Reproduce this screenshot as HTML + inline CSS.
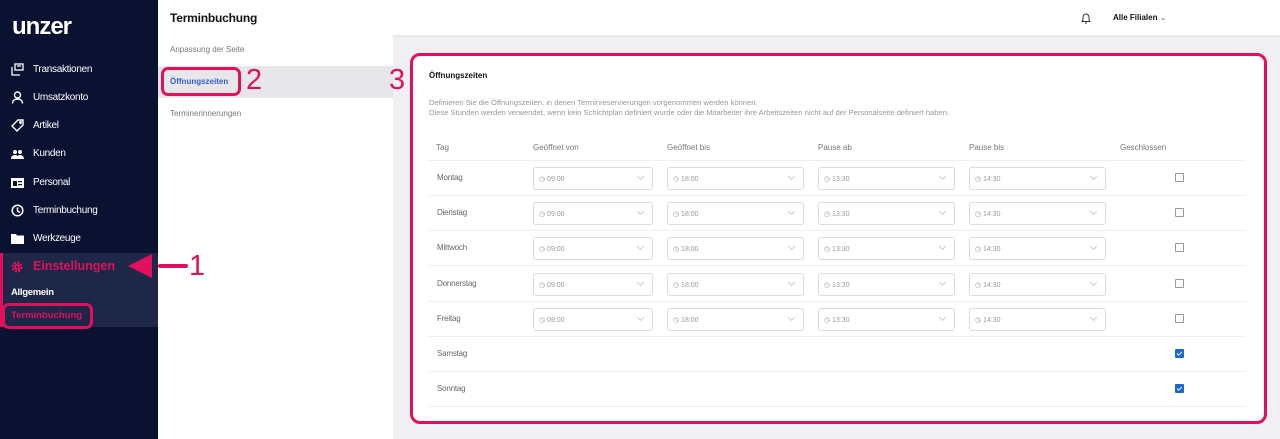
<!DOCTYPE html>
<html><head><meta charset="utf-8"><style>
*{box-sizing:border-box;margin:0;padding:0}
body{width:1280px;height:439px;overflow:hidden;background:#f0f0f3;font-family:"Liberation Sans",sans-serif;position:relative}
.a{position:absolute}
#side{left:0;top:0;width:158px;height:439px;background:#0b1131}
.nav{left:33px;color:#fff;font-size:10px;letter-spacing:-0.3px}
.ic{left:11px;width:13px;height:13px}
#top{left:158px;top:0;width:1122px;height:35px;background:#fff;box-shadow:0 1px 3px rgba(0,0,0,.06)}
#sub{left:158px;top:35px;width:235px;height:404px;background:#fff}
#card{left:410px;top:53px;width:857px;height:371px;background:#fff;border:3px solid #e0105e;border-radius:10px}
.lbl{font-size:8px;color:#666;letter-spacing:-0.2px}
.hd{font-size:8px;color:#777}
.line{left:428px;width:818px;height:1px;background:#efeff1}
.inp{height:23px;border:1px solid #dcdce0;border-radius:3px;background:#fff;font-size:7px;color:#999}
.inp span{position:absolute;left:5px;top:7px}
.inp i{position:absolute;right:9px;top:6px;width:5px;height:5px;border-right:1px solid #ccc;border-bottom:1px solid #ccc;transform:rotate(45deg)}
.cb{left:1175px;width:9px;height:9px;border:1px solid #999;border-radius:1px;background:#fff}
.cb.on{background:#1a66d6;border-color:#1a66d6}
.red{color:#e0105e}
</style></head><body>
<div id="side" class="a">
 <div class="a" style="left:12px;top:13px;color:#fff;font-size:24px;font-weight:bold;letter-spacing:-1px">unzer</div>
 <svg class="a ic" style="top:63px" viewBox="0 0 13 13" fill="none" stroke="#fff" stroke-width="1.3"><rect x="4" y="1" width="8" height="6"/><path d="M1 4v8h8"/><path d="M6 3h4"/></svg>
 <div class="a nav" style="top:64px">Transaktionen</div>
 <svg class="a ic" style="top:91px" viewBox="0 0 13 13" fill="none" stroke="#fff" stroke-width="1.4"><circle cx="6.5" cy="4" r="3"/><path d="M1.5 12.5c0-3 2-4.5 5-4.5s5 1.5 5 4.5"/></svg>
 <div class="a nav" style="top:92px">Umsatzkonto</div>
 <svg class="a ic" style="top:119px" viewBox="0 0 13 13" fill="none" stroke="#fff" stroke-width="1.4"><path d="M7 1h5v5l-6 6-5-5z"/><circle cx="9.5" cy="3.5" r=".8"/></svg>
 <div class="a nav" style="top:120px">Artikel</div>
 <svg class="a ic" style="top:148px" viewBox="0 0 13 13" fill="#fff"><circle cx="4" cy="4" r="2"/><circle cx="9" cy="4" r="2"/><path d="M0 11c0-3 2-4 4-4s4 1 4 4zM6 11c0-3 1.5-4 3-4s4 1 4 4z"/></svg>
 <div class="a nav" style="top:148px">Kunden</div>
 <svg class="a ic" style="top:176px" viewBox="0 0 13 13"><rect x="0" y="2" width="13" height="10" fill="#fff"/><rect x="2" y="5" width="4" height="5" fill="#0b1131"/><rect x="7" y="5" width="4" height="1.2" fill="#0b1131"/><rect x="7" y="8" width="4" height="1.2" fill="#0b1131"/></svg>
 <div class="a nav" style="top:177px">Personal</div>
 <svg class="a ic" style="top:204px" viewBox="0 0 13 13" fill="none" stroke="#fff" stroke-width="1.5"><circle cx="6.5" cy="6.5" r="5.3"/><path d="M6.5 3.5v3.5l2.5 1.5"/></svg>
 <div class="a nav" style="top:205px">Terminbuchung</div>
 <svg class="a ic" style="top:232px" viewBox="0 0 13 13" fill="#fff"><path d="M0 2h5l1 1.5h7V12H0z"/></svg>
 <div class="a nav" style="top:233px">Werkzeuge</div>
 <div class="a" style="left:0;top:253px;width:158px;height:74px;background:#1e2748"></div>
 <div class="a" style="left:0;top:253px;width:3px;height:74px;background:#e0105e"></div>
 <svg class="a" style="left:11px;top:261px" width="12" height="12" viewBox="0 0 12 12"><circle cx="6" cy="6" r="4.3" fill="none" stroke="#e0105e" stroke-width="2.6" stroke-dasharray="2 1.4"/><circle cx="6" cy="6" r="3" fill="#e0105e"/><circle cx="6" cy="6" r="1.2" fill="#1e2748"/></svg>
 <div class="a red" style="left:33px;top:259px;font-size:12.5px;font-weight:bold">Einstellungen</div>
 <div class="a" style="left:11px;top:287px;font-size:9.5px;color:#fff;font-weight:bold;letter-spacing:-0.3px">Allgemein</div>
 <div class="a red" style="left:11px;top:310px;font-size:9.5px;font-weight:bold">Terminbuchung</div>
 <div class="a" style="left:2px;top:303px;width:91px;height:26px;border:3px solid #e0105e;border-radius:7px"></div>
</div>
<div id="top" class="a">
 <div class="a" style="left:12px;top:11px;font-size:12px;color:#111;font-weight:bold;letter-spacing:-0.2px">Terminbuchung</div>
 <svg class="a" style="left:923px;top:12px" width="10" height="12" viewBox="0 0 10 12" fill="none" stroke="#333" stroke-width="1"><path d="M2 8V5a3 3 0 016 0v3l1 1.5H1z"/><path d="M4 11h2"/></svg>
 <div class="a" style="left:955px;top:13px;font-size:8px;color:#111;font-weight:bold">Alle Filialen <span style="font-weight:normal;color:#777">&#8964;</span></div>
</div>
<div id="sub" class="a">
 <div class="a" style="left:12px;top:10px;font-size:8px;color:#777">Anpassung der Seite</div>
 <div class="a" style="left:0;top:31px;width:235px;height:32px;background:#e7e7ea"></div>
 <div class="a" style="left:12px;top:42px;font-size:8px;color:#3a5bd6;font-weight:bold">Öffnungszeiten</div>
 <div class="a" style="left:3px;top:32px;width:80px;height:29px;border:3px solid #e0105e;border-radius:7px"></div>
 <div class="a" style="left:12px;top:74px;font-size:8px;color:#777">Terminerinnerungen</div>
</div>
<!-- arrow 1 -->
<svg class="a" style="left:124px;top:250px" width="70" height="33"><path d="M62 16H36" stroke="#e0105e" stroke-width="4" stroke-linecap="round"/><path d="M4 16L28 4v24z" fill="#e0105e"/></svg>
<div class="a red" style="left:189px;top:250px;font-size:29px">1</div>
<div class="a red" style="left:246px;top:64px;font-size:29px">2</div>
<div class="a red" style="left:389px;top:64px;font-size:29px">3</div>
<div id="card" class="a"></div>
<div class="a" style="left:429px;top:71px;font-size:8px;color:#111;font-weight:bold">Öffnungszeiten</div>
<div class="a" style="left:429px;top:98px;font-size:7.6px;color:#999;line-height:9.5px">Definieren Sie die Öffnungszeiten, in denen Terminreservierungen vorgenommen werden können.<br>Diese Stunden werden verwendet, wenn kein Schichtplan definiert wurde oder die Mitarbeiter ihre Arbeitszeiten nicht auf der Personalseite definiert haben.</div>
<div class="a hd" style="left:436px;top:143px">Tag</div>
<div class="a hd" style="left:533px;top:143px">Geöffnet von</div>
<div class="a hd" style="left:667px;top:143px">Geöffnet bis</div>
<div class="a hd" style="left:818px;top:143px">Pause ab</div>
<div class="a hd" style="left:969px;top:143px">Pause bis</div>
<div class="a hd" style="left:1120px;top:143px">Geschlossen</div>
<div class="a line" style="top:160px"></div>
<div id="rows"></div>
<script>
var days=["Montag","Dienstag","Mittwoch","Donnerstag","Freitag","Samstag","Sonntag"];
var h="";
for(var i=0;i<7;i++){var y=160+i*35.2;var c=y+18;
h+='<div class="a lbl" style="left:437px;top:'+(c-5)+'px">'+days[i]+'</div>';
if(i<5){var cols=[[533,120,"09:00"],[667,137,"18:00"],[818,137,"13:30"],[969,137,"14:30"]];
cols.forEach(function(k){h+='<div class="a inp" style="left:'+k[0]+'px;top:'+(c-11)+'px;width:'+k[1]+'px"><span>&#9719; '+k[2]+'</span><i></i></div>';});
h+='<div class="a cb" style="top:'+(c-5)+'px"></div>';}
else h+='<div class="a cb on" style="top:'+(c-5)+'px"><svg width="7" height="7" style="position:absolute;left:0;top:0" viewBox="0 0 7 7"><path d="M1 3.5l1.7 1.7L6 1.8" stroke="#fff" fill="none" stroke-width="1"/></svg></div>';
h+='<div class="a line" style="top:'+(y+35)+'px"></div>';}
document.getElementById("rows").innerHTML=h;
</script>
</body></html>
